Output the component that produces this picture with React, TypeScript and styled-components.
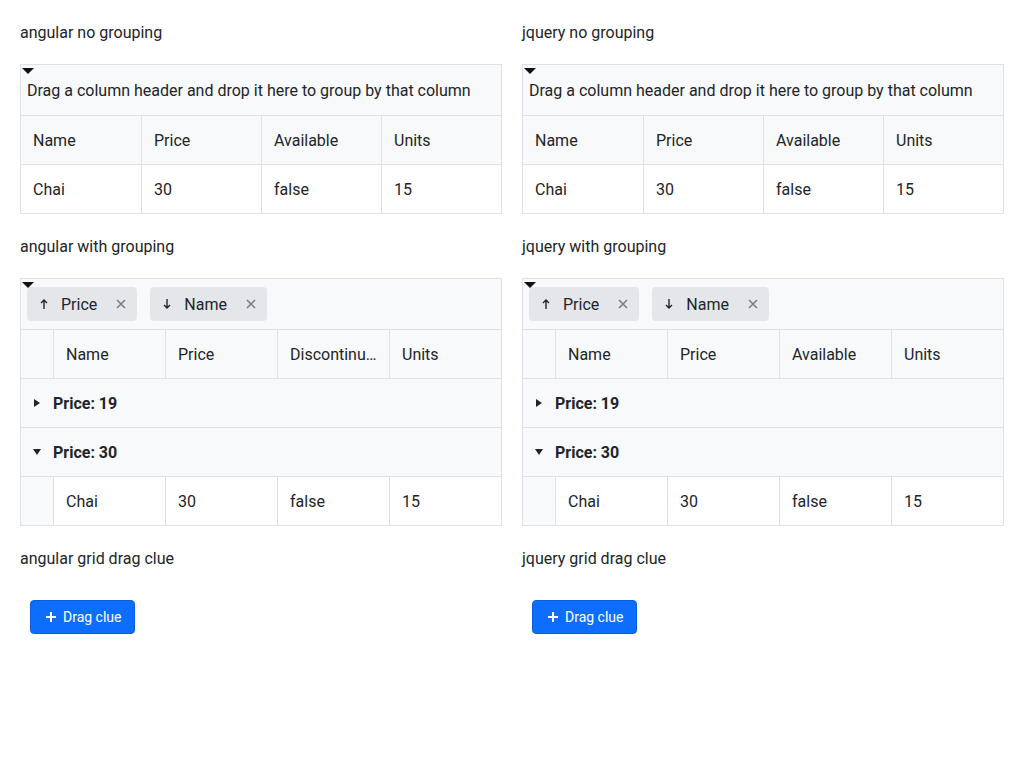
import styled, { createGlobalStyle } from "styled-components";

const GlobalStyle = createGlobalStyle`
  body {
    margin: 0;
    background: #fff;
    font-family: Roboto, "Liberation Sans", sans-serif;
    color: #212529;
  }
  * { box-sizing: border-box; }
`;

const Page = styled.div`
  display: grid;
  grid-template-columns: 482px 482px;
  column-gap: 20px;
  row-gap: 20px;
  padding: 20px;
  align-items: start;
`;

const Title = styled.div`
  font-size: 16px;
  line-height: 23px;
  padding-top: 1px;
`;

const Section = styled.div`
  display: flex;
  flex-direction: column;
  gap: 20px;
`;

const GridBox = styled.div`
  border: 1px solid #dee2e6;
  font-size: 16px;
`;

const GroupPanel = styled.div`
  position: relative;
  height: 50px;
  background: #f8f9fa;
  display: flex;
  align-items: center;
  gap: 13px;
  padding-left: 6px;
`;

const PanelToggle = styled.span`
  position: absolute;
  left: 1px;
  top: 3px;
  width: 0;
  height: 0;
  border-left: 6px solid transparent;
  border-right: 6px solid transparent;
  border-top: 6px solid #111;
`;

const Chip = styled.div`
  display: flex;
  align-items: center;
  height: 34px;
  padding: 0 11px 0 12px;
  background: #e4e6ea;
  border-radius: 4px;
  color: #212529;
`;

const ChipLabel = styled.span`
  margin: 0 19px 0 12px;
`;

const Row = styled.div<{ $bg?: string }>`
  display: grid;
  grid-template-columns: repeat(4, 1fr);
  height: 49px;
  border-top: 1px solid #dee2e6;
  background: ${(p) => p.$bg || "#fff"};
`;

const IndentRow = styled(Row)`
  grid-template-columns: 32px repeat(4, 1fr);
`;

const Cell = styled.div<{ $grey?: boolean }>`
  display: flex;
  align-items: center;
  min-width: 0;
  padding: 0 12px;
  white-space: nowrap;
  overflow: hidden;
  background: ${(p) => (p.$grey ? "#f8f9fa" : "transparent")};
  & + & {
    border-left: 1px solid #dee2e6;
  }
`;

const CellText = styled.span`
  overflow: hidden;
  text-overflow: ellipsis;
`;

const GroupRow = styled.div`
  display: flex;
  align-items: center;
  height: 49px;
  border-top: 1px solid #dee2e6;
  background: #f8f9fa;
  padding-left: 12px;
  font-weight: 700;
`;

const Caret = styled.span`
  display: inline-flex;
  width: 8px;
  justify-content: center;
  margin-right: 12px;
`;

const ButtonWrap = styled.div`
  padding: 10px;
`;

const Button = styled.button`
  display: inline-flex;
  align-items: center;
  gap: 6px;
  height: 34px;
  padding: 0 13px 0 14px;
  background: #0d6efd;
  border: 1px solid #0b5ed7;
  border-radius: 4px;
  color: #fff;
  font-family: Roboto, "Liberation Sans", sans-serif;
  font-size: 14px;
`;

const UpArrow = () => (
  <svg width="10" height="12" viewBox="0 0 10 12">
    <path d="M5 11V2M2 5l3-3 3 3" stroke="#212529" strokeWidth="1.4" fill="none" />
  </svg>
);
const DownArrow = () => (
  <svg width="10" height="12" viewBox="0 0 10 12">
    <path d="M5 1v9M2 7l3 3 3-3" stroke="#212529" strokeWidth="1.4" fill="none" />
  </svg>
);
const CloseX = () => (
  <svg width="10" height="10" viewBox="0 0 10 10">
    <path d="M1 1l8 8M9 1L1 9" stroke="#7a7f85" strokeWidth="1.6" />
  </svg>
);
const RightTri = () => (
  <svg width="6" height="8" viewBox="0 0 6 8">
    <path d="M0 0l6 4-6 4z" fill="#212529" />
  </svg>
);
const DownTri = () => (
  <svg width="8" height="6" viewBox="0 0 8 6">
    <path d="M0 0h8L4 6z" fill="#212529" />
  </svg>
);
const Plus = () => (
  <svg width="12" height="12" viewBox="0 0 12 12">
    <path d="M6 1v10M1 6h10" stroke="#fff" strokeWidth="2" />
  </svg>
);

const PlainGrid = () => (
  <GridBox>
    <GroupPanel>
      <PanelToggle />
      Drag a column header and drop it here to group by that column
    </GroupPanel>
    <Row $bg="#f8f9fa">
      <Cell>Name</Cell>
      <Cell>Price</Cell>
      <Cell>Available</Cell>
      <Cell>Units</Cell>
    </Row>
    <Row>
      <Cell>Chai</Cell>
      <Cell>30</Cell>
      <Cell>false</Cell>
      <Cell>15</Cell>
    </Row>
  </GridBox>
);

const GroupedGrid = ({ angular }: { angular: boolean }) => (
  <GridBox>
    <GroupPanel>
      <PanelToggle />
      <Chip>
        <UpArrow />
        <ChipLabel>Price</ChipLabel>
        <CloseX />
      </Chip>
      <Chip>
        <DownArrow />
        <ChipLabel>Name</ChipLabel>
        <CloseX />
      </Chip>
    </GroupPanel>
    <IndentRow $bg="#f8f9fa">
      <Cell />
      <Cell>Name</Cell>
      <Cell>Price</Cell>
      <Cell>
        <CellText>{angular ? "Discontinu…" : "Available"}</CellText>
      </Cell>
      <Cell>Units</Cell>
    </IndentRow>
    <GroupRow>
      <Caret>
        <RightTri />
      </Caret>
      Price: 19
    </GroupRow>
    <GroupRow>
      <Caret>
        <DownTri />
      </Caret>
      Price: 30
    </GroupRow>
    <IndentRow>
      <Cell $grey />
      <Cell>Chai</Cell>
      <Cell>30</Cell>
      <Cell>false</Cell>
      <Cell>15</Cell>
    </IndentRow>
  </GridBox>
);

const DragClue = () => (
  <ButtonWrap>
    <Button>
      <Plus />
      Drag clue
    </Button>
  </ButtonWrap>
);

export default function App() {
  return (
    <>
      <GlobalStyle />
      <Page>
        <Section>
          <Title>angular no grouping</Title>
          <PlainGrid />
        </Section>
        <Section>
          <Title>jquery no grouping</Title>
          <PlainGrid />
        </Section>
        <Section>
          <Title>angular with grouping</Title>
          <GroupedGrid angular />
        </Section>
        <Section>
          <Title>jquery with grouping</Title>
          <GroupedGrid angular={false} />
        </Section>
        <Section>
          <Title>angular grid drag clue</Title>
          <DragClue />
        </Section>
        <Section>
          <Title>jquery grid drag clue</Title>
          <DragClue />
        </Section>
      </Page>
    </>
  );
}
